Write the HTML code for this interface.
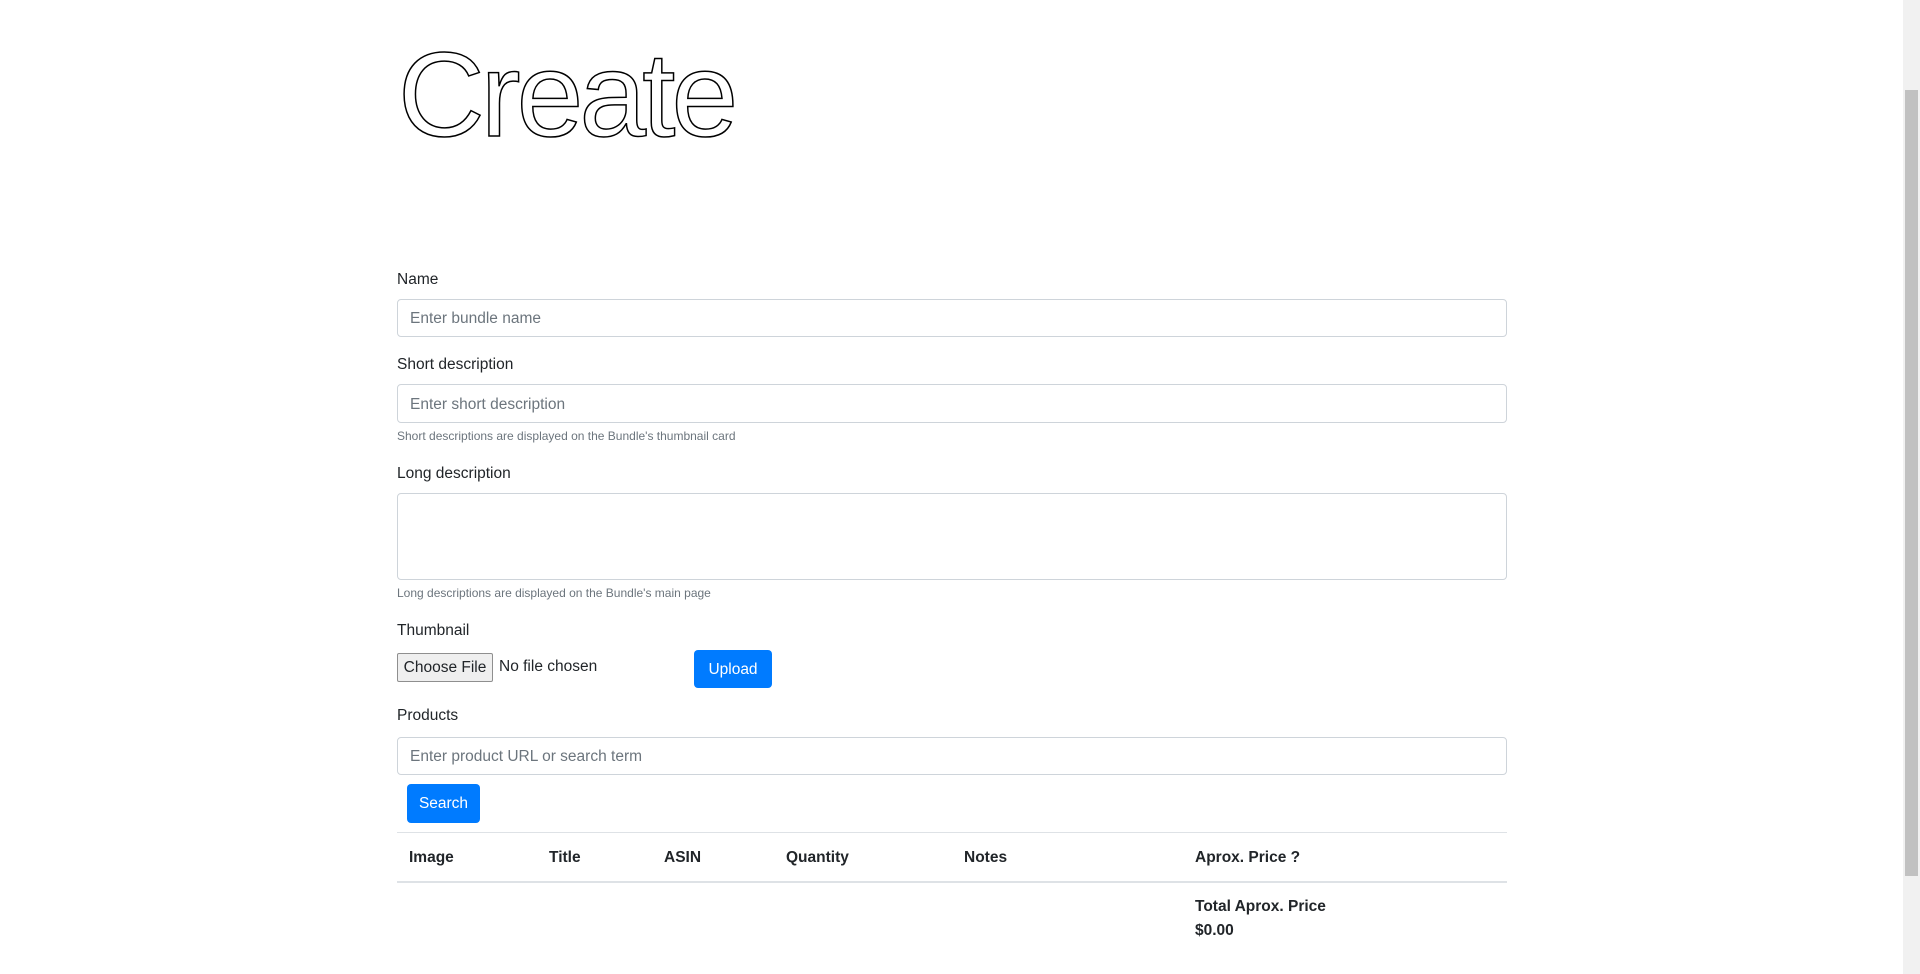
<!DOCTYPE html>
<html><head><meta charset="utf-8"><style>
body{margin:0;width:1920px;height:974px;overflow:hidden;background:#fff;font-family:"Liberation Sans",sans-serif;color:#212529;position:relative}
.a{position:absolute}
.lbl{font-size:15.5px;line-height:20px}
.inp{position:absolute;left:397px;width:1110px;border:1px solid #ced4da;border-radius:4px;box-sizing:border-box;font-size:15.5px;color:#6c757d;padding-left:12px}
.sm{font-size:12px;color:#6c757d}
.btn{position:absolute;background:#007bff;color:#fff;border-radius:4px;font-size:15.5px;text-align:center}
.th{font-weight:bold;font-size:15.5px;top:849px}
</style></head><body>
<div class="a" style="left:398px;top:25px;font-size:120px;font-weight:300;color:#fff;-webkit-text-stroke:1.5px #000;line-height:140px;letter-spacing:-4px">Create</div>
<div class="a lbl" style="left:397px;top:270px">Name</div>
<div class="inp" style="top:299px;height:38px;line-height:38px">Enter bundle name</div>
<div class="a lbl" style="left:397px;top:355px">Short description</div>
<div class="inp" style="top:384px;height:39px;line-height:39px">Enter short description</div>
<div class="a sm" style="left:397px;top:429px">Short descriptions are displayed on the Bundle's thumbnail card</div>
<div class="a lbl" style="left:397px;top:464px">Long description</div>
<div class="inp" style="top:493px;height:87px"></div>
<div class="a sm" style="left:397px;top:586px">Long descriptions are displayed on the Bundle's main page</div>
<div class="a lbl" style="left:397px;top:621px">Thumbnail</div>
<div class="a" style="left:397px;top:653px;width:96px;height:29px;box-sizing:border-box;border:1px solid #8f8f8f;background:#efefef;font-size:15.5px;line-height:27px;text-align:center;border-radius:2px">Choose File</div>
<div class="a" style="left:499px;top:656px;font-size:15.5px;line-height:22px">No file chosen</div>
<div class="btn" style="left:694px;top:650px;width:78px;height:38px;line-height:40px">Upload</div>
<div class="a lbl" style="left:397px;top:706px">Products</div>
<div class="inp" style="top:737px;height:38px;line-height:38px">Enter product URL or search term</div>
<div class="btn" style="left:407px;top:784px;width:73px;height:39px;line-height:40px">Search</div>
<div class="a" style="left:397px;top:832px;width:1110px;height:1px;background:#dee2e6"></div>
<div class="a th" style="left:409px">Image</div>
<div class="a th" style="left:549px">Title</div>
<div class="a th" style="left:664px">ASIN</div>
<div class="a th" style="left:786px">Quantity</div>
<div class="a th" style="left:964px">Notes</div>
<div class="a th" style="left:1195px">Aprox. Price ?</div>
<div class="a" style="left:397px;top:881px;width:1110px;height:2px;background:#dee2e6"></div>
<div class="a th" style="left:1195px;top:898px">Total Aprox. Price</div>
<div class="a th" style="left:1195px;top:922px">$0.00</div>
<div class="a" style="left:1903px;top:0;width:17px;height:974px;background:#f1f1f1"></div>
<div class="a" style="left:1905px;top:90px;width:13px;height:786px;background:#c1c1c1"></div>
</body></html>
